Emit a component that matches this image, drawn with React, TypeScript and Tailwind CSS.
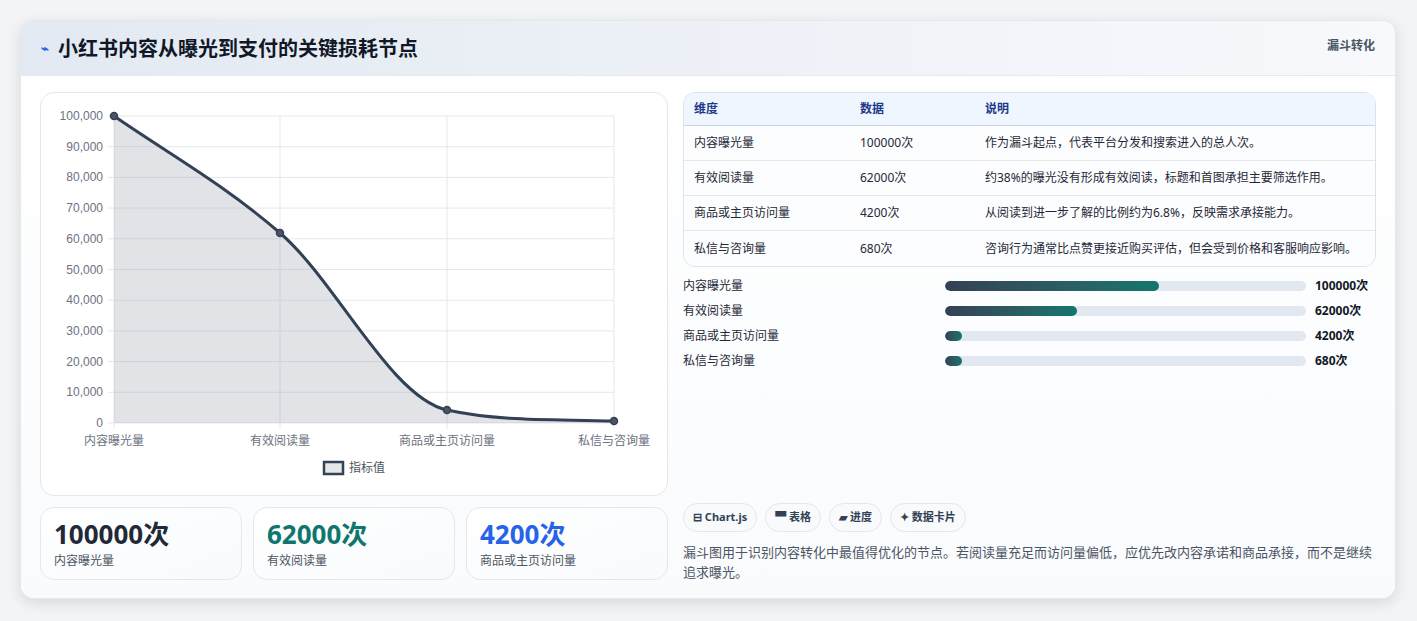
import React from "react";

const F = { fontFamily: '"Noto Sans","Noto Sans CJK SC",sans-serif' };

const rows = [
  ["内容曝光量", "100000次", "作为漏斗起点，代表平台分发和搜索进入的总人次。"],
  ["有效阅读量", "62000次", "约38%的曝光没有形成有效阅读，标题和首图承担主要筛选作用。"],
  ["商品或主页访问量", "4200次", "从阅读到进一步了解的比例约为6.8%，反映需求承接能力。"],
  ["私信与咨询量", "680次", "咨询行为通常比点赞更接近购买评估，但会受到价格和客服响应影响。"],
];
const bars = [
  ["内容曝光量", "100000次", 59.3],
  ["有效阅读量", "62000次", 36.6],
  ["商品或主页访问量", "4200次", 4.7],
  ["私信与咨询量", "680次", 4.7],
];

function Chart() {
  const x0 = 73, x1 = 573, y0 = 23, y1 = 330;
  const ys = [100000, 90000, 80000, 70000, 60000, 50000, 40000, 30000, 20000, 10000, 0];
  const xs = [73, 239, 406, 573];
  const xl = ["内容曝光量", "有效阅读量", "商品或主页访问量", "私信与咨询量"];
  const line = "M73,23 C128,61 184,92 239,140 C295,188 350,305 406,317 C461,329 517,326 573,328";
  return (
    <svg width="627" height="404" className="block">
      {ys.map((v, i) => {
        const y = y0 + (i * (y1 - y0)) / 10;
        return (
          <g key={v}>
            <line x1={x0 - 6} x2={x1} y1={y} y2={y} stroke="#e5e7eb" />
            <text x={62} y={y + 4} textAnchor="end" fontSize="12" fill="#6b7280" fontFamily="Liberation Sans, sans-serif">{v.toLocaleString("en-US")}</text>
          </g>
        );
      })}
      {xs.map((x, i) => (
        <g key={x}>
          <line x1={x} x2={x} y1={y0} y2={y1 + 6} stroke="#e5e7eb" />
          <text x={x} y={352} textAnchor="middle" fontSize="12" fill="#6b7280" style={F}>{xl[i]}</text>
        </g>
      ))}
      <path d={line + " L573,330 L73,330 Z"} fill="rgba(156,163,175,0.3)" />
      <path d={line} fill="none" stroke="#334155" strokeWidth="3" />
      {[[73, 23], [239, 140], [406, 317], [573, 328]].map(([x, y]) => (
        <circle key={x} cx={x} cy={y} r="3.5" fill="#4b5563" stroke="#334155" strokeWidth="1.5" />
      ))}
      <rect x={283} y={369} width={19} height={12} fill="#e5e7eb" stroke="#334155" strokeWidth="2.5" />
      <text x={308} y={379} fontSize="12" fill="#4b5563" style={F}>指标值</text>
    </svg>
  );
}

export default function App() {
  return (
    <div className="w-[1417px] h-[621px] bg-[#f3f4f6] pt-[20px] pl-[20px]" style={F}>
      <div className="w-[1376px] h-[579px] rounded-[14px] bg-white shadow-[0_4px_14px_rgba(15,23,42,0.12)] overflow-hidden border border-[#e5e7eb]">
        <div className="h-[55px] bg-gradient-to-r from-[#e3e9f2] to-[#f7f9fc] flex items-start justify-between pl-[20px] pr-[20px] border-b border-[#e5e9f0]">
          <div className="flex items-center gap-[9px] h-[55px]">
            <span className="text-[#2563eb] text-[13px] font-bold">⌁</span>
            <span className="text-[20px] font-bold text-[#111827]">小红书内容从曝光到支付的关键损耗节点</span>
          </div>
          <span className="text-[12px] font-bold text-[#4b5563] mt-[16px]">漏斗转化</span>
        </div>
        <div className="flex gap-[15px] px-[19px] pt-[16px] bg-gradient-to-b from-white to-[#f9fbfd] h-[524px]">
          <div className="w-[628px] flex flex-col gap-[11px]">
            <div className="h-[404px] rounded-[14px] border border-[#e5e7eb] bg-white overflow-hidden">
              <Chart />
            </div>
            <div className="flex gap-[11px]">
              {[
                ["100000次", "text-[#1f2937]", "内容曝光量"],
                ["62000次", "text-[#0f766e]", "有效阅读量"],
                ["4200次", "text-[#2563eb]", "商品或主页访问量"],
              ].map(([n, c, l]) => (
                <div key={n} className="w-[202px] h-[73px] rounded-[14px] border border-[#e2e8f0] bg-gradient-to-br from-white to-[#f8fafc] px-[13px] pt-[10px]">
                  <div className={`text-[26px] font-bold leading-[32px] ${c}`}>{n}</div>
                  <div className="text-[12px] text-[#4b5563] mt-[2px]">{l}</div>
                </div>
              ))}
            </div>
          </div>
          <div className="flex-1 flex flex-col">
            <div className="rounded-[12px] border border-[#dbe3ee] overflow-hidden text-[12px]">
              <div className="flex h-[33px] items-center bg-[#eff6ff] text-[#1e3a8a] font-bold border-b border-[#cbd5e1] px-[10px]">
                <span className="w-[166px]">维度</span><span className="w-[125px]">数据</span><span>说明</span>
              </div>
              {rows.map((r, i) => (
                <div key={i} className={`flex h-[35px] items-center px-[10px] text-[#1f2937] bg-[#fcfdfe] ${i < 3 ? "border-b border-[#e5e7eb]" : ""}`}>
                  <span className="w-[166px]">{r[0]}</span><span className="w-[125px]">{r[1]}</span><span>{r[2]}</span>
                </div>
              ))}
            </div>
            <div className="flex flex-col gap-[7px] mt-[10px] text-[12px]">
              {bars.map(([l, v, w]) => (
                <div key={l as string} className="flex items-center h-[18px]">
                  <span className="w-[262px] text-[#1f2937]">{l}</span>
                  <div className="w-[361px] h-[10px] rounded-full bg-[#e2e8f0] overflow-hidden">
                    <div className="h-full rounded-full bg-gradient-to-r from-[#334155] to-[#0f766e]" style={{ width: `${w}%` }} />
                  </div>
                  <span className="ml-[9px] font-bold text-[#111827]">{v}</span>
                </div>
              ))}
            </div>
            <div className="flex-1" />
            <div className="flex gap-[8px] text-[11px] font-bold text-[#334155]">
              {["⊟ Chart.js", "▀ 表格", "▰ 进度", "✦ 数据卡片"].map((t) => (
                <span key={t} className="h-[29px] px-[9px] rounded-full border border-[#e5e7eb] bg-[#f8fafc] flex items-center">{t}</span>
              ))}
            </div>
            <p className="text-[13px] leading-[20px] text-[#4b5563] mt-[10px] mb-[18px]">
              漏斗图用于识别内容转化中最值得优化的节点。若阅读量充足而访问量偏低，应优先改内容承诺和商品承接，而不是继续追求曝光。
            </p>
          </div>
        </div>
      </div>
    </div>
  );
}
